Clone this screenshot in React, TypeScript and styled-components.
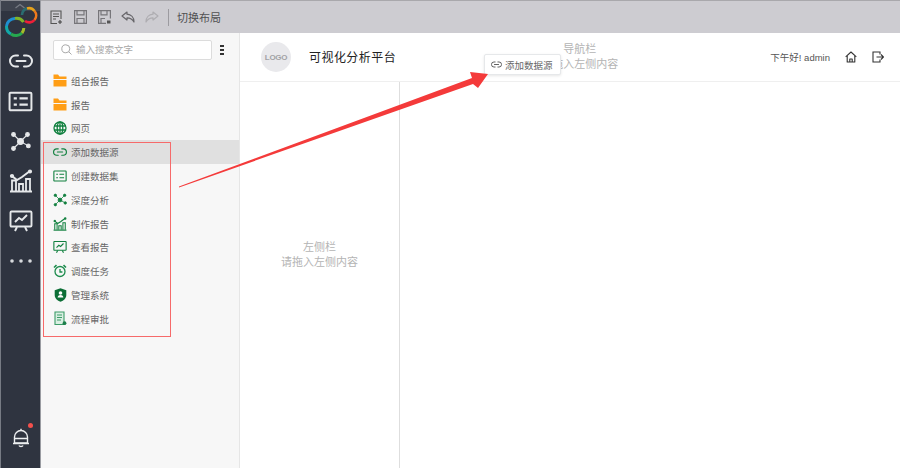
import React from "react";
import styled, { createGlobalStyle } from "styled-components";

const Global = createGlobalStyle`
  html, body { margin: 0; padding: 0; background: #fff; }
  body { font-family: "Liberation Sans", "Noto Sans CJK SC", sans-serif; }
  * { box-sizing: border-box; }
`;

const Page = styled.div`
  position: relative;
  width: 900px;
  height: 468px;
  display: flex;
  overflow: hidden;
`;
const Rail = styled.nav`
  width: 41px;
  height: 468px;
  background: #2f3440;
  border-left: 1px solid #777b84;
  border-right: 1px solid #9a9ca2;
  display: flex;
  flex-direction: column;
  align-items: center;
`;
const LogoCell = styled.div`
  height: 41px;
  width: 100%;
  flex: none;
  background: linear-gradient(#3f444f 0 10px, #2f3440 10px);
  border-top: 1px solid #8a8c92;
`;
const RailItem = styled.div`
  height: 40px;
  flex: none;
  display: flex;
  align-items: center;
  justify-content: center;
`;
const RailSpacer = styled.div`
  flex: 1;
`;
const BellCell = styled.div`
  position: relative;
  height: 40px;
  flex: none;
`;
const Dot = styled.span`
  position: absolute;
  left: 16px;
  top: -5px;
  width: 5px;
  height: 5px;
  border-radius: 50%;
  background: #f4504c;
`;
const Column = styled.div`
  flex: 1;
  display: flex;
  flex-direction: column;
  min-width: 0;
`;
const Toolbar = styled.div`
  height: 33px;
  flex: none;
  background: #cdccd1;
  border-top: 1px solid #a9a8ac;
  display: flex;
  align-items: center;
  padding-left: 8px;
  gap: 10px;
`;
const ToolIcon = styled.span<{ $w?: number; $flip?: boolean }>`
  width: ${(p) => p.$w ?? 14}px;
  height: 16px;
  display: flex;
  align-items: center;
  justify-content: center;
  transform: ${(p) => (p.$flip ? "scaleX(-1)" : "none")};
`;
const ToolDivider = styled.span`
  width: 1px;
  height: 17px;
  background: #9c9ba0;
  margin-left: -1px;
`;
const ToolText = styled.span`
  font-size: 11px;
  color: #505052;
  margin-left: -2px;
`;
const Body = styled.div`
  flex: 1;
  display: flex;
  min-height: 0;
`;
const Sidebar = styled.aside`
  width: 199px;
  flex: none;
  background: #f7f7f7;
  border-right: 1px solid #e6e6e6;
  display: flex;
  flex-direction: column;
`;
const SearchRow = styled.div`
  height: 36px;
  flex: none;
  display: flex;
  align-items: flex-start;
  padding: 7px 0 0 12px;
`;
const SearchBox = styled.div`
  width: 159px;
  height: 20px;
  background: #fff;
  border: 1px solid #dcdcdc;
  border-radius: 2px;
  display: flex;
  align-items: center;
  padding-left: 7px;
  gap: 4px;
  font-size: 9.5px;
  line-height: 16px;
  padding-bottom: 1px;
  color: #a8a8a8;
`;
const MoreBars = styled.div`
  margin: 5px 0 0 8px;
  width: 4px;
  display: flex;
  flex-direction: column;
  gap: 2px;
`;
const MoreBar = styled.span`
  height: 2px;
  background: #333;
`;
const Menu = styled.div`
  display: flex;
  flex-direction: column;
`;
const MenuRow = styled.div<{ $active?: boolean }>`
  height: 23.8px;
  display: flex;
  align-items: center;
  padding-left: 12px;
  gap: 4px;
  font-size: 9.5px;
  color: #666;
  background: ${(p) => (p.$active ? "#e0e0e0" : "transparent")};
`;
const MenuIcon = styled.span`
  width: 14px;
  height: 14px;
  flex: none;
  display: flex;
  align-items: center;
  justify-content: center;
`;
const Main = styled.main`
  flex: 1;
  display: flex;
  flex-direction: column;
  min-width: 0;
`;
const Header = styled.header`
  height: 49px;
  flex: none;
  border-bottom: 1px solid #efefef;
  display: flex;
  align-items: center;
  padding: 0 16px 0 21px;
`;
const LogoCircle = styled.div`
  width: 30px;
  height: 30px;
  border-radius: 50%;
  background: #e9e9ec;
  color: #a2a2a6;
  font-size: 8px;
  font-weight: 700;
  letter-spacing: -0.3px;
  display: flex;
  align-items: center;
  justify-content: center;
`;
const Title = styled.h1`
  margin: 0 0 2px 18px;
  font-size: 12px;
  font-weight: 400;
  letter-spacing: 0.45px;
  color: #222;
`;
const HeaderHint = styled.div`
  flex: 1;
  text-align: center;
  font-size: 11px;
  line-height: 15px;
  color: #b4b4b4;
  padding-right: 7px;
`;
const Greeting = styled.span`
  font-size: 9.5px;
  color: #555;
`;
const HeadIcon = styled.span`
  width: 12px;
  height: 12px;
  display: flex;
  margin-left: 15px;
`;
const Content = styled.div`
  flex: 1;
  display: flex;
`;
const LeftPane = styled.div`
  width: 160px;
  flex: none;
  border-right: 1px solid #dedede;
  text-align: center;
  font-size: 11px;
  line-height: 15px;
  color: #b4b4b4;
  padding-top: 158px;
`;
const Chip = styled.div`
  position: absolute;
  left: 484px;
  top: 54px;
  width: 77px;
  height: 21px;
  background: #fff;
  border: 1px solid #e6e8ea;
  border-radius: 2px;
  box-shadow: 0 1px 3px rgba(0, 0, 0, 0.1);
  display: flex;
  align-items: center;
  padding-left: 6px;
  gap: 3px;
  font-size: 9.5px;
  color: #666;
`;
const RedBox = styled.div`
  position: absolute;
  left: 43px;
  top: 142px;
  width: 128px;
  height: 195px;
  border: 1px solid #f66a6a;
`;
const ArrowSvg = styled.svg`
  position: absolute;
  left: 0;
  top: 0;
  pointer-events: none;
`;

type IP = { c: string; s?: number };

const LinkIcon = ({ c, s = 14 }: IP) => (
  <svg width={s} height={s} viewBox="0 0 24 24" fill="none" stroke={c} strokeWidth="2" strokeLinecap="round">
    <path d="M9 6.5H6.500a5.500 5.500 0 0 0 0 11H9M15 6.500h2.500a5.500 5.500 0 0 1 0 11H15M7.500 12h9" />
  </svg>
);
const ListIcon = ({ c, s = 14 }: IP) => (
  <svg width={s} height={s} viewBox="0 0 24 24" fill="none" stroke={c} strokeWidth="1.900">
    <rect x="1.500" y="3.500" width="21" height="17" rx="1" />
    <path d="M5.500 9h3M11 9h8M5.500 15h3M11 15h8" strokeWidth="2" />
  </svg>
);
const NetIcon = ({ c, s = 14 }: IP) => (
  <svg width={s} height={s} viewBox="0 0 24 24" fill={c} stroke={c} strokeWidth="1.300">
    <path d="M4 4l8 8M20 4l-8 8M4 20l8-8M21 17l-9-5" fill="none" />
    <circle cx="12" cy="12" r="3.300" />
    <circle cx="4" cy="4" r="2.100" />
    <circle cx="20" cy="4" r="2.100" />
    <circle cx="4" cy="20" r="2.100" />
    <circle cx="21" cy="17" r="2.100" />
  </svg>
);
const ChartIcon = ({ c, s = 14 }: IP) => (
  <svg width={s} height={s} viewBox="0 0 24 24" fill="none" stroke={c} strokeWidth="1.800">
    <path d="M1 22.500h22" strokeWidth="2" />
    <path d="M3 22V11.500h4V22M10 22v-7h4v7M17 22V10h4v12" />
    <path d="M3 7l5 4 5-3 8-6" strokeWidth="2" />
    <circle cx="3" cy="7" r="1.200" fill={c} />
    <circle cx="21" cy="2.500" r="1.200" fill={c} />
  </svg>
);
const ScreenIcon = ({ c, s = 14 }: IP) => (
  <svg width={s} height={s} viewBox="0 0 24 24" fill="none" stroke={c} strokeWidth="1.900">
    <rect x="1.500" y="2.500" width="21" height="15" rx="1" />
    <path d="M6 13l4-4 3 2 5-5" />
    <path d="M8 18l-2 4M16 18l2 4" />
  </svg>
);
const FolderIcon = () => (
  <svg width="14" height="13" viewBox="0 0 14 13">
    <path d="M0.500 0.500h4.500l1.500 2h7v2.500H0.500z" fill="#ff9e16" />
    <path d="M0.500 6h13v6.500H0.500z" fill="#ff9e16" />
  </svg>
);
const GlobeIcon = () => (
  <svg width="14" height="14" viewBox="0 0 14 14" fill="none" stroke="#11803f" strokeWidth="1.300">
    <circle cx="7" cy="7" r="6" />
    <ellipse cx="7" cy="7" rx="2.800" ry="6" />
    <path d="M1 5h12M1 9h12M7 1v12" />
  </svg>
);
const ClockIcon = () => (
  <svg width="14" height="14" viewBox="0 0 14 14" fill="none" stroke="#1d8c4d" strokeWidth="1.300">
    <circle cx="7" cy="7.500" r="5" />
    <path d="M7 5v3h2.400" />
    <path d="M1 3.500L3.500 1.200M13 3.500L10.500 1.200" strokeWidth="1.600" />
  </svg>
);
const ShieldIcon = () => (
  <svg width="13" height="14" viewBox="0 0 13 14">
    <path d="M6.500 0.300L12.300 2.200V7c0 3.400-2.600 5.600-5.800 6.800C3.300 12.600 0.700 10.400 0.700 7V2.200z" fill="#0c6e36" />
    <circle cx="6.500" cy="5" r="1.800" fill="#fff" />
    <path d="M3.600 9.400c.4-1.600 1.500-2.300 2.900-2.300s2.500.7 2.900 2.300z" fill="#fff" />
  </svg>
);
const AuditIcon = () => (
  <svg width="13" height="15" viewBox="0 0 13 15" fill="none">
    <path d="M1 1h9v12.500H1z" fill="#d9efe2" stroke="#3c9c68" strokeWidth="1.100" />
    <path d="M3 4h5M3 6.500h5M3 9h4" stroke="#3c9c68" strokeWidth="1" />
    <circle cx="10.500" cy="12.200" r="1.900" fill="#1d7f4a" />
  </svg>
);

const NewIcon = () => (
  <svg width="13" height="15" viewBox="0 0 13 15" fill="none" stroke="#555" strokeWidth="1.100">
    <path d="M7 13.500H1V1h10v8" />
    <path d="M3 4h6M3 6.500h6M3 9h3" />
    <path d="M10 10v4M8 12h4" stroke="#444" />
  </svg>
);
const SaveIcon = () => (
  <svg width="13" height="14" viewBox="0 0 13 14" fill="none" stroke="#77767a" strokeWidth="1.200">
    <path d="M.6.6h11.800v12.800H.6z" />
    <path d="M3 .8v4h7v-4M3 13V8.500h7V13" />
  </svg>
);
const SaveAsIcon = () => (
  <svg width="13" height="14" viewBox="0 0 13 14" fill="none" stroke="#77767a" strokeWidth="1.200">
    <path d="M8 13.400H.6V.6h11.800v8" />
    <path d="M3 .8v4h6v-4M3 13V8.500h4" />
    <path d="M9 10.500h3.500v3H9z" fill="#555" stroke="none" />
  </svg>
);
const UndoIcon = ({ c }: { c: string }) => (
  <svg width="14" height="12" viewBox="0 0 14 12" fill="none" stroke={c} strokeWidth="1.200" strokeLinejoin="round">
    <path d="M6 1L1 5l5 4V6.800c3 0 5.500 1.200 7 4.200 0-4.500-3-7.500-7-7.800z" />
  </svg>
);
const HomeIcon = () => (
  <svg width="12" height="12" viewBox="0 0 12 12" fill="none" stroke="#333" strokeWidth="1.100" strokeLinejoin="round">
    <path d="M.7 5.800L6 1l5.300 4.800" />
    <path d="M2.200 5v6h7.600V5" />
    <path d="M4.800 11V8h2.400v3" />
  </svg>
);
const ExitIcon = () => (
  <svg width="12" height="12" viewBox="0 0 12 12" fill="none" stroke="#333" strokeWidth="1.100">
    <path d="M8 3.500V1H1v10h7V8.500" />
    <path d="M4.500 6h7M9 3.500L11.500 6 9 8.500" />
  </svg>
);
const BellIcon = () => (
  <svg width="18" height="20" viewBox="0 0 18 20" fill="none" stroke="#eceef0" strokeWidth="1.400" strokeLinejoin="round">
    <path d="M2.500 15V9a6.500 6.500 0 0 1 13 0v6z" />
    <path d="M1 15.500h16M3 10.500h12M7 17.500c.5 1.300 3.500 1.300 4 0" />
    <path d="M9 .8v1.500" />
  </svg>
);
const DotsIcon = () => (
  <svg width="22" height="4" viewBox="0 0 22 4" fill="#d8dadd">
    <circle cx="2" cy="2" r="1.800" />
    <circle cx="11" cy="2" r="1.800" />
    <circle cx="20" cy="2" r="1.800" />
  </svg>
);
const SearchGlyph = () => (
  <svg width="11" height="11" viewBox="0 0 11 11" fill="none" stroke="#a8a8a8" strokeWidth="1">
    <circle cx="4.800" cy="4.800" r="4" />
    <path d="M7.800 7.800l2.700 2.700" />
  </svg>
);
const BrandLogo = () => (
  <svg width="38" height="40" viewBox="0 0 38 40" fill="none" strokeWidth="2.800" style={{ display: "block" }}>
    <path d="M14.500 7L19 3.500 23.500 7" stroke="#777b84" strokeWidth="1.300" />
    <g strokeWidth="2.600">
      <path d="M21 14A7 7 0 0 1 26 7.500" stroke="#2a6d70" />
      <path d="M26 7.500A7 7 0 0 1 33.500 10" stroke="#e6a21b" />
      <path d="M33.500 10A7 7 0 0 1 33.500 19" stroke="#ef7a1c" />
      <path d="M33.500 19A7 7 0 0 1 24 20" stroke="#ee1f38" />
    </g>
    <g strokeWidth="3">
      <path d="M22.500 21A8.500 8.500 0 0 0 14 17.500" stroke="#7fb32a" />
      <path d="M14 17.500A8.500 8.500 0 0 0 5.500 25" stroke="#1f8fd0" />
      <path d="M5.500 25A8.500 8.500 0 0 0 10 33" stroke="#12a8a8" />
      <path d="M10 33A8.500 8.500 0 0 0 21 32" stroke="#25a84e" />
      <path d="M21 32A8.500 8.500 0 0 0 22.800 27" stroke="#a5bd2a" />
    </g>
  </svg>
);

const G = "#11803f";
const menu: [React.ReactNode, string][] = [
  [<FolderIcon />, "组合报告"],
  [<FolderIcon />, "报告"],
  [<GlobeIcon />, "网页"],
  [<LinkIcon c={G} />, "添加数据源"],
  [<ListIcon c={G} />, "创建数据集"],
  [<NetIcon c={G} />, "深度分析"],
  [<ChartIcon c={G} />, "制作报告"],
  [<ScreenIcon c={G} />, "查看报告"],
  [<ClockIcon />, "调度任务"],
  [<ShieldIcon />, "管理系统"],
  [<AuditIcon />, "流程审批"],
];
const W = "#e6e8ea";

export default function App() {
  return (
    <Page>
      <Global />
      <Rail>
        <LogoCell>
          <BrandLogo />
        </LogoCell>
        <RailItem><LinkIcon c={W} s={24} /></RailItem>
        <RailItem><ListIcon c={W} s={25} /></RailItem>
        <RailItem><NetIcon c={W} s={21} /></RailItem>
        <RailItem><ChartIcon c={W} s={24} /></RailItem>
        <RailItem><ScreenIcon c={W} s={24} /></RailItem>
        <RailItem><DotsIcon /></RailItem>
        <RailSpacer />
        <BellCell>
          <Dot />
          <BellIcon />
        </BellCell>
      </Rail>
      <Column>
        <Toolbar>
          <ToolIcon><NewIcon /></ToolIcon>
          <ToolIcon><SaveIcon /></ToolIcon>
          <ToolIcon><SaveAsIcon /></ToolIcon>
          <ToolIcon><UndoIcon c="#666569" /></ToolIcon>
          <ToolIcon $flip><UndoIcon c="#aeadb1" /></ToolIcon>
          <ToolDivider />
          <ToolText>切换布局</ToolText>
        </Toolbar>
        <Body>
          <Sidebar>
            <SearchRow>
              <SearchBox>
                <SearchGlyph />
                输入搜索文字
              </SearchBox>
              <MoreBars><MoreBar /><MoreBar /><MoreBar /></MoreBars>
            </SearchRow>
            <Menu>
              {menu.map(([icon, label], i) => (
                <MenuRow key={label} $active={i === 3}>
                  <MenuIcon>{icon}</MenuIcon>
                  {label}
                </MenuRow>
              ))}
            </Menu>
          </Sidebar>
          <Main>
            <Header>
              <LogoCircle>LOGO</LogoCircle>
              <Title>可视化分析平台</Title>
              <HeaderHint>导航栏<br />请拖入左侧内容</HeaderHint>
              <Greeting>下午好! admin</Greeting>
              <HeadIcon><HomeIcon /></HeadIcon>
              <HeadIcon><ExitIcon /></HeadIcon>
            </Header>
            <Content>
              <LeftPane>左侧栏<br />请拖入左侧内容</LeftPane>
            </Content>
          </Main>
        </Body>
      </Column>
      <RedBox />
      <Chip>
        <LinkIcon c="#555" s={11} />
        添加数据源
      </Chip>
      <ArrowSvg width="900" height="468" viewBox="0 0 900 468">
        <polygon points="179,187.500 473,84 478,88 488,74 470,72 472,78 179,186.500" fill="#f43a3a" />
      </ArrowSvg>
    </Page>
  );
}
